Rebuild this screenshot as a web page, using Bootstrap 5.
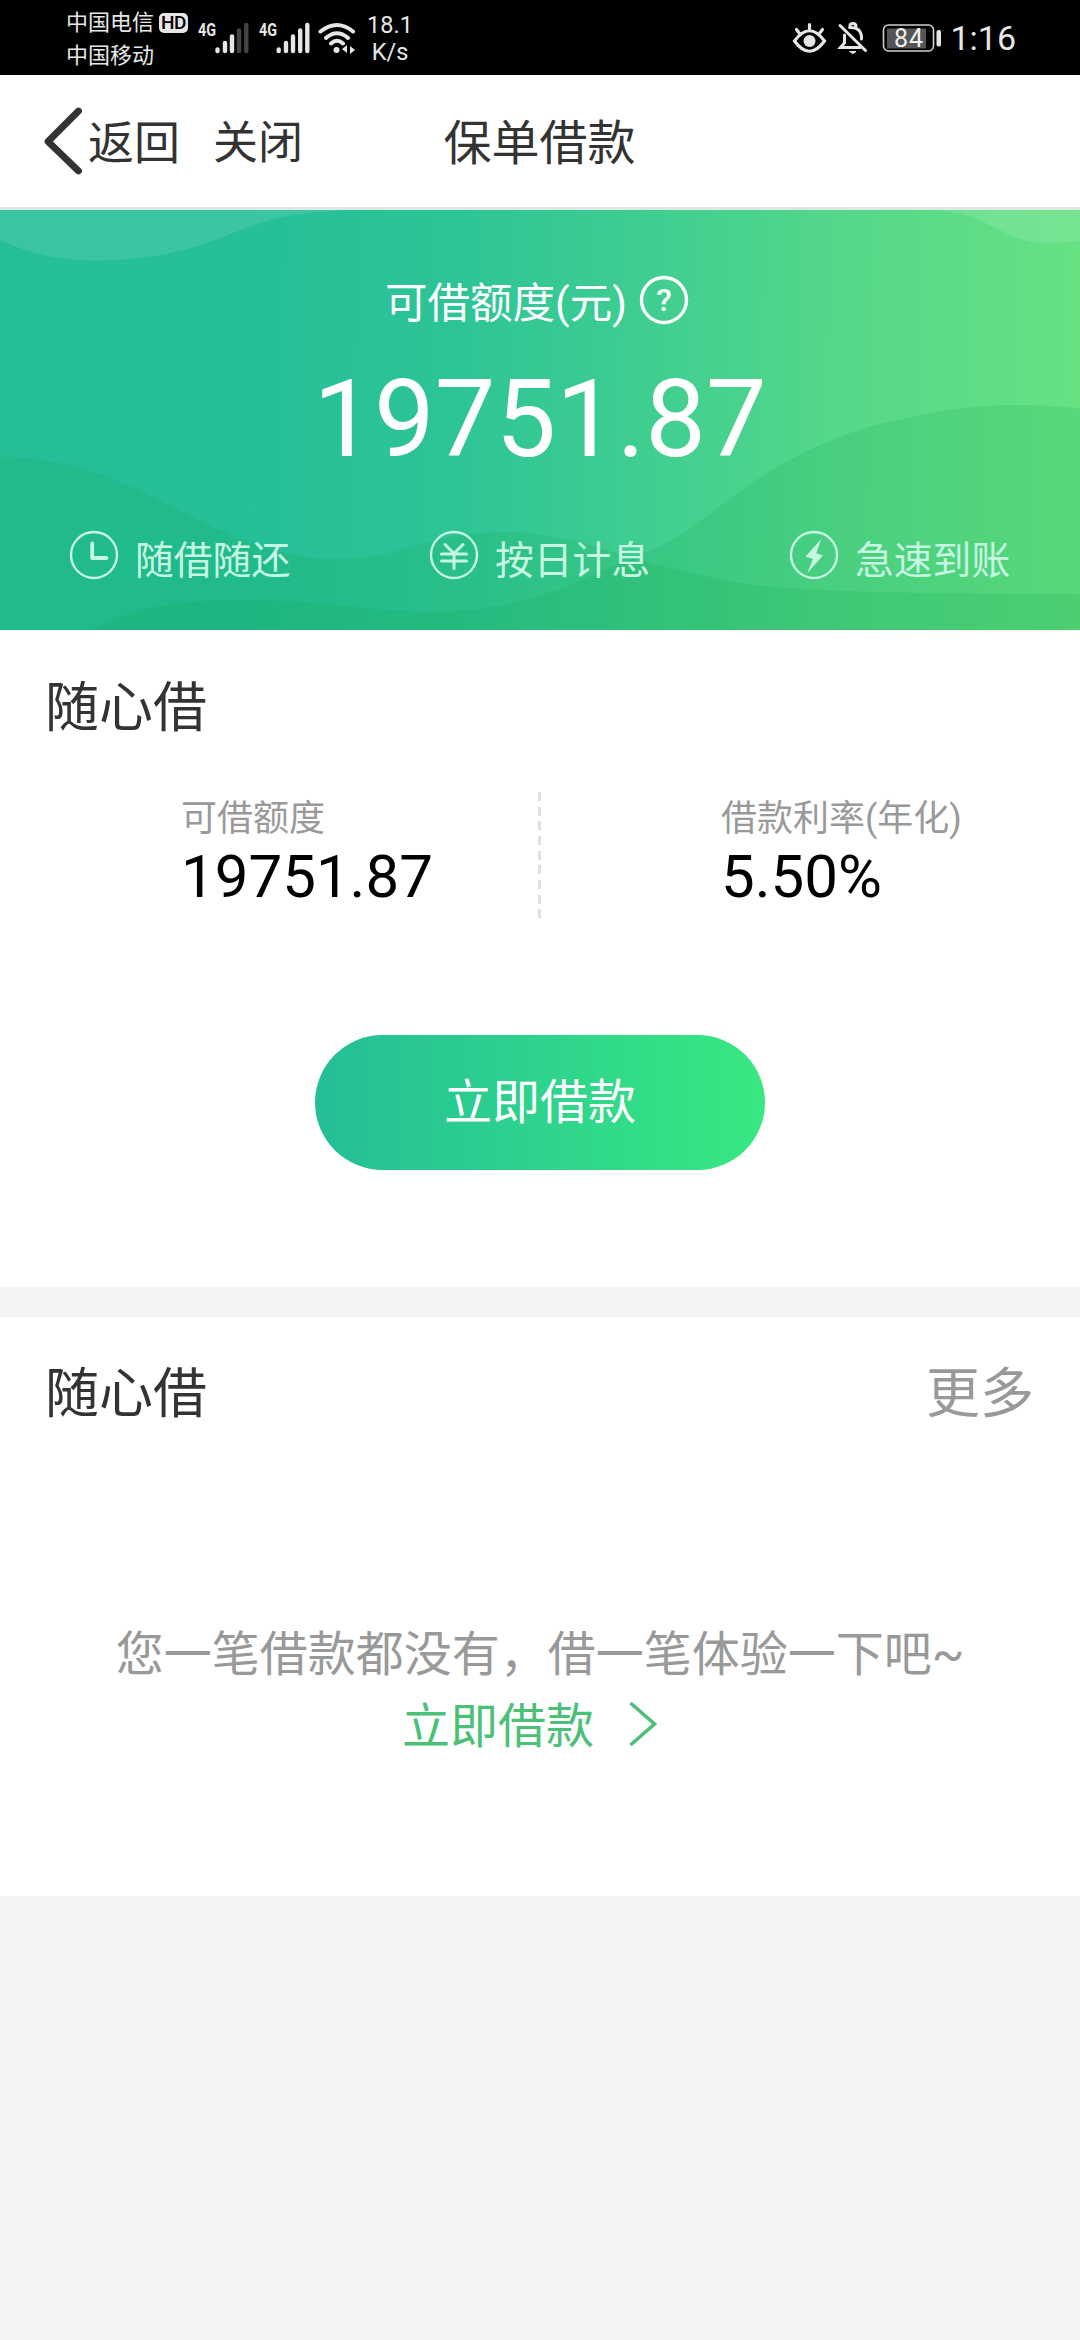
<!DOCTYPE html>
<html lang="zh-CN">
<head>
<meta charset="utf-8">
<meta name="viewport" content="width=device-width, initial-scale=1">
<title>保单借款</title>
<link href="https://cdn.jsdelivr.net/npm/bootstrap@5.3.0/dist/css/bootstrap.min.css" rel="stylesheet">
<style>
body{font-family:Roboto,"Noto Sans CJK SC",sans-serif;background:#f4f4f4;color:#333;line-height:1.2;font-size:48px}
svg{display:block;flex:none}
.statusbar{height:75px;background:#000;color:#e6e6e6;padding:0 64px 0 66px}
.carriers{font-size:22px;line-height:33px;padding-top:6px;width:122px}
.hd-tag{width:30px;height:20px;border-radius:5px;background:#e6e6e6;color:#000;font-size:19px;line-height:20px;margin-left:5px;letter-spacing:-.5px;font-weight:500}
.speed{font-size:23.5px;line-height:27px;width:46px;margin-left:11px;padding-top:2px}
.clock{font-size:34px;line-height:75px;margin-left:8px;padding-top:1px}
.topbar{height:135px;border-bottom:3px solid #dfe6e3;display:grid;grid-template-columns:1fr auto 1fr;padding:0 45px 0 44px}
.topbar .nav-text{font-size:46px;padding-top:5px}
.topbar .nav-close{font-size:45px;margin-left:33px}
.page-name{font-size:48px;padding-top:6px}
.hero{height:420px;background:linear-gradient(91deg,#24be98 0%,#25bf98 24%,#2dc496 42%,#42cf90 62%,#55d88a 78%,#66e282 100%)}
.hero-waves{z-index:0}
.hero-body{z-index:1}
.hero-label{font-size:42.5px;line-height:60px;padding-top:64px}
.hero-sum{font-size:108px;line-height:110px;padding-top:30px}
.perk{font-size:38.8px;line-height:50px;color:#c6f7e2;padding-left:69px;gap:16px}
.perk span{padding-top:6px;margin-bottom:-6px}
.perks{padding-top:56px}
.section-name{font-size:54px;line-height:60px}
.loan-panel{height:657px;padding-top:49px}
.stats{margin-top:53px;height:126px}
.stat-cell{padding-left:181px;padding-top:6px}
.stat-label{font-size:36px;line-height:42px;color:#999}
.stat-num{font-size:60px;line-height:60px;color:#000;padding-top:7px;height:71px}
.split{width:3px;height:126px;background:repeating-linear-gradient(#e0e0e0 0 9px,transparent 9px 14.65px);margin-left:-2px;margin-right:-1px}
.btn-loan{width:450px;height:135px;font-size:48px;color:#fff;background:linear-gradient(90deg,#24be98,#38e881);border:0;margin-top:117px;padding:0}
.btn-loan:hover{color:#fff}
.record-panel{height:579px;margin-top:30px;padding-top:48px}
.side-pad{padding-left:45px;padding-right:46px}
.more-link,.empty-msg{color:#999}
.empty-box{padding-top:194px}
.empty-msg,.go-link{line-height:72px}
.go-link{color:#4bc077;gap:34px;padding-right:21px}
.go-link svg{margin-top:-7px}
</style>
</head>
<body>
<div class="statusbar d-flex align-items-center">
  <div class="align-self-start carriers">
    <div class="d-flex align-items-center text-nowrap">中国电信<span class="hd-tag text-center">HD</span></div>
    <div>中国移动</div>
  </div>
  <svg class="ms-2" width="60" height="36" viewBox="196 19 60 36">
    <text x="198" y="35" font-size="18" font-weight="700" fill="#e6e6e6" textLength="18" lengthAdjust="spacingAndGlyphs">4G</text>
    <g stroke="#e6e6e6" stroke-width="4.4" stroke-linecap="round"><path d="M217.500 48.500v1.500M225 42v8M232 35.500v14.500"/><path stroke="#444" d="M239 29.500v20.500M246.300 24v26"/></g>
  </svg>
  <svg width="60" height="36" viewBox="256 19 60 36">
    <text x="259" y="35" font-size="18" font-weight="700" fill="#e6e6e6" textLength="18" lengthAdjust="spacingAndGlyphs">4G</text>
    <path stroke="#e6e6e6" stroke-width="4.4" stroke-linecap="round" d="M278.700 48.500v1.500M286 42v8M293 35.500v14.500M300.200 29.500v20.500M307.300 24v26"/>
  </svg>
  <svg width="40" height="36" viewBox="316 19 40 36">
    <g fill="none" stroke="#e6e6e6" stroke-width="4" stroke-linecap="round"><path d="M320.500 30.500Q337 17.500 353 30.500M326 37Q337 27.500 348 37M331 42.500Q337 37 343 42.500"/></g>
    <circle cx="336.500" cy="49" r="3" fill="#e6e6e6"/><path fill="#e6e6e6" d="M342 48l5-4v8zM350 45v8l5-4z"/>
  </svg>
  <div class="speed text-center">18.1<br>K/s</div>
  <div class="d-flex align-items-center ms-auto">
    <svg width="36" height="36" viewBox="791 19 36 36" fill="none" stroke="#e6e6e6" stroke-width="3.200" stroke-linecap="round">
      <path d="M794.500 40Q809.500 19.500 824.500 40Q809.500 60.500 794.500 40zM809.500 23.500v5M796.500 28.500l3.500 4.500M822.500 28.500L819 33"/><circle cx="809.500" cy="40" r="6" fill="#e6e6e6" stroke="none"/>
    </svg>
    <svg width="34" height="36" viewBox="836 19 34 36" fill="none" stroke="#e6e6e6" stroke-width="3" stroke-linecap="round" style="margin-left:9px">
      <path d="M840 24.500L865.500 49.500M844.500 34v8l-4 4.500h19.500M849.500 26.500Q862 26 861.500 38M850 24.500q0-2 3-2t3 3"/><path d="M850 50.500h6l-3 2z" fill="#e6e6e6" stroke-width="1"/>
    </svg>
    <svg width="60" height="30" viewBox="882 22.500 60 30" style="margin-left:12px">
      <rect x="883.500" y="24.500" width="50" height="26" rx="5" fill="none" stroke="#cfcfcf" stroke-width="1.600"/><rect x="887" y="28" width="39" height="20" fill="#555"/><rect x="936.500" y="29.500" width="4.500" height="16.500" rx="2" fill="#e6e6e6"/>
      <text x="894" y="46.500" font-size="25" fill="#f0f0f0" textLength="29">84</text>
    </svg>
    <div class="clock">1:16</div>
  </div>
</div>

<nav class="topbar bg-white align-items-center">
  <div class="d-flex align-items-center">
    <svg width="38" height="68" viewBox="44 107 38 68"><path d="M78.500 111L48 141.500L78.500 171" fill="none" stroke="#333" stroke-width="6.800" stroke-linecap="round" stroke-linejoin="round"/></svg>
    <span class="nav-text" style="margin-left:6px">返回</span>
    <span class="nav-text nav-close">关闭</span>
  </div>
  <div class="page-name">保单借款</div>
</nav>

<header class="hero position-relative text-white overflow-hidden">
  <svg class="hero-waves position-absolute top-0 start-0" width="1080" height="420" viewBox="0 0 1080 420">
    <path fill="#fff" fill-opacity=".1" d="M0 30C30 44 60 51 100 50.700C140 50 175 44 207 33C240 22 270 0 365 0H0z"/>
    <path fill="#fff" fill-opacity=".12" d="M937 0C975 4 985 14 1000 20C1020 31 1035 36 1080 31V0z"/>
    <path fill="#14a550" fill-opacity=".17" d="M0 247C50 247 90 258 138 280C175 297 195 310 227 323C270 342 305 350 344 349C405 347 430 322 510 322C550 323 585 333 610 341C645 352 690 364 747 374C800 381 900 384 1080 384V420H0z"/>
    <path fill="#14a550" fill-opacity=".17" d="M1080 199C1060 196 1040 195 1020 195C990 195 965 197 943 201C910 207 880 213 853 222C825 232 800 244 777 257C758 268 742 280 727 291C713 301 700 312 687 321C673 330 660 337 647 342L600 362C540 390 490 402 427 402C370 401 310 389 241 390C190 390 140 394 93 420H1080z"/>
  </svg>
  <div class="hero-body position-relative">
    <div class="hero-label d-flex justify-content-center align-items-center">
      <span>可借额度(元)</span>
      <svg width="50" height="50" viewBox="0 0 50 50" style="margin:-8px 6px 0 12px"><circle cx="25" cy="25" r="22.500" fill="none" stroke="#fff" stroke-width="3.400"/><text x="25" y="36" font-size="32" font-weight="500" fill="#fff" text-anchor="middle">?</text></svg>
    </div>
    <div class="hero-sum text-center">19751.87</div>
    <div class="row g-0 perks">
      <div class="col-4"><div class="perk d-flex align-items-center">
        <svg width="50" height="50" viewBox="0 0 50 50" fill="none" stroke="#c6f7e2" stroke-linecap="round" stroke-linejoin="round"><circle cx="25" cy="25" r="23" stroke-width="2.400"/><path d="M23.200 13.500V28H37.500" stroke-width="3.800"/></svg><span>随借随还</span></div></div>
      <div class="col-4"><div class="perk d-flex align-items-center">
        <svg width="50" height="50" viewBox="0 0 50 50" fill="none" stroke="#c6f7e2" stroke-linecap="round" stroke-linejoin="round"><circle cx="25" cy="25" r="23" stroke-width="2.400"/><path d="M16 14.500L25 23.500L34 14.500M25 23.500V38.500M12.500 24H37.500M12.500 31H37.500" stroke-width="3"/></svg><span>按日计息</span></div></div>
      <div class="col-4"><div class="perk d-flex align-items-center">
        <svg width="50" height="50" viewBox="0 0 50 50"><circle cx="25" cy="25" r="23" stroke="#c6f7e2" fill="none" stroke-width="2.400"/><path d="M32.300 9L16.500 26.500L24 29L18.300 43L34 25.500L27.300 23.300z" fill="#c6f7e2"/></svg><span>急速到账</span></div></div>
    </div>
  </div>
</header>

<section class="loan-panel bg-white">
  <div class="section-name side-pad">随心借</div>
  <div class="stats d-flex">
    <div class="flex-fill w-50 stat-cell"><div class="stat-label">可借额度</div><div class="stat-num">19751.87</div></div>
    <div class="split flex-shrink-0"></div>
    <div class="flex-fill w-50 stat-cell"><div class="stat-label">借款利率(年化)</div><div class="stat-num">5.50%</div></div>
  </div>
  <div class="text-center d-flex justify-content-center"><button class="btn btn-loan rounded-pill" type="button">立即借款</button></div>
</section>

<section class="record-panel bg-white">
  <div class="section-name side-pad d-flex justify-content-between"><span>随心借</span><span class="more-link">更多</span></div>
  <div class="empty-box text-center">
    <div class="empty-msg">您一笔借款都没有，借一笔体验一下吧~</div>
    <div class="go-link d-flex justify-content-center align-items-center"><span>立即借款</span>
      <svg width="29" height="50" viewBox="0 0 29 50"><path d="M2.500 4L26.500 25L2.500 46" fill="none" stroke="#4bc077" stroke-width="3.600"/></svg></div>
  </div>
</section>
<script src="https://cdn.jsdelivr.net/npm/bootstrap@5.3.0/dist/js/bootstrap.bundle.min.js"></script>
</body>
</html>
